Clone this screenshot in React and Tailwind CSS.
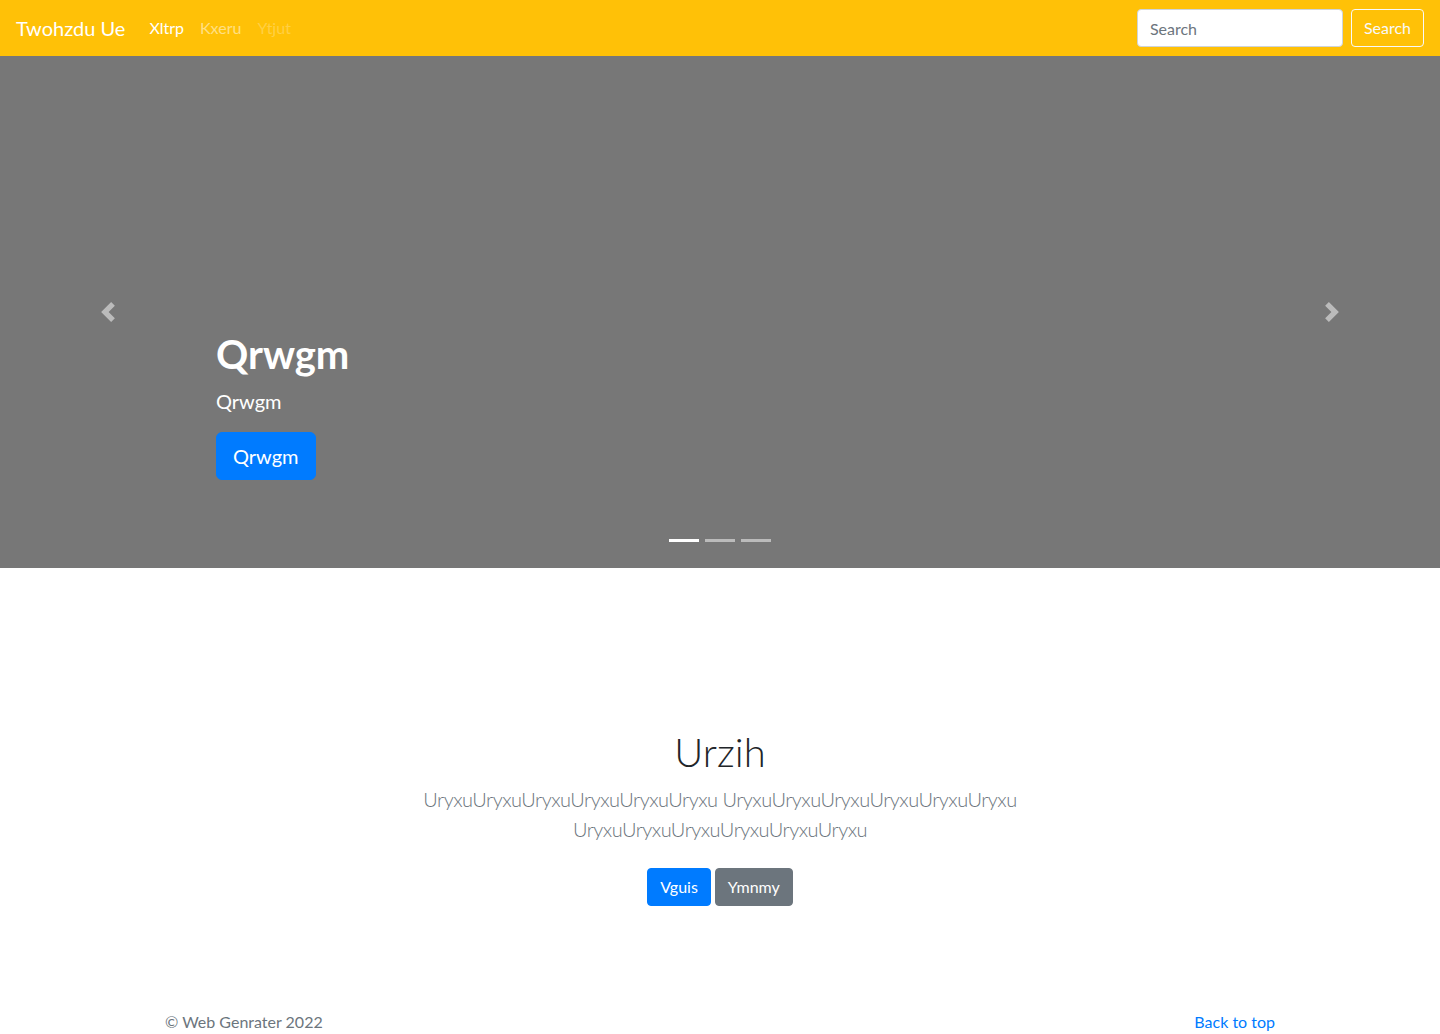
import React, { useState } from "react";

const slides = [{ title: "Qrwgm", text: "Qrwgm", button: "Qrwgm" }, {}, {}];

const navLinks = [
  { label: "Xltrp", cls: "text-white" },
  { label: "Kxeru", cls: "text-white/50" },
  { label: "Ytjut", cls: "text-white/25" },
];

const Chevron = ({ dir }) => (
  <svg width="20" height="20" viewBox="0 0 8 8" className="opacity-50">
    {dir === "prev" ? (
      <path fill="#fff" d="M5.25 0l-4 4 4 4 1.5-1.5-2.5-2.5 2.5-2.5-1.5-1.5z" />
    ) : (
      <path fill="#fff" d="M2.75 0l-1.5 1.5 2.5 2.5-2.5 2.5 1.5 1.5 4-4-4-4z" />
    )}
  </svg>
);

function Navbar() {
  return (
    <nav className="h-14 bg-[#ffc107] flex items-center px-4">
      <a href="#" className="text-xl text-white mr-4 leading-[30px]">
        Twohzdu Ue
      </a>
      <ul className="flex">
        {navLinks.map((l) => (
          <li key={l.label}>
            <a href="#" className={"block px-2 py-2 " + l.cls}>
              {l.label}
            </a>
          </li>
        ))}
      </ul>
      <form className="ml-auto flex items-center" onSubmit={(e) => e.preventDefault()}>
        <input
          type="text"
          placeholder="Search"
          className="w-[206px] h-[38px] px-3 rounded border border-[#ced4da] bg-white text-[#495057] placeholder:text-[#6c757d] mr-2 outline-none"
        />
        <button className="h-[38px] px-3 rounded border border-[#f8f9fa] text-[#f8f9fa]">
          Search
        </button>
      </form>
    </nav>
  );
}

function Carousel() {
  const [active, setActive] = useState(0);
  const slide = slides[0];
  return (
    <div className="relative h-[512px] bg-[#777] flex">
      <button className="w-[15%] flex items-center justify-center">
        <Chevron dir="prev" />
      </button>
      <div className="flex-1 flex flex-col justify-end pb-[88px] text-white">
        <h1 className="text-[40px] font-bold leading-[48px] mb-2">{slide.title}</h1>
        <p className="text-xl leading-[30px] mb-4">{slide.text}</p>
        <div>
          <a
            href="#"
            className="inline-block bg-[#007bff] border border-[#007bff] text-white text-xl px-4 py-2 leading-[30px] rounded-md"
          >
            {slide.button}
          </a>
        </div>
      </div>
      <button className="w-[15%] flex items-center justify-center">
        <Chevron dir="next" />
      </button>
      <ol className="absolute bottom-[26px] left-0 right-0 flex justify-center">
        {slides.map((s, i) => (
          <li
            key={i}
            onClick={() => setActive(i)}
            className={
              "w-[30px] h-[3px] mx-[3px] bg-white " +
              (i === active ? "opacity-100" : "opacity-50")
            }
          />
        ))}
      </ol>
    </div>
  );
}

function App() {
  return (
    <div className="min-h-screen bg-white font-['Lato',sans-serif] text-base leading-6 text-[#212529]">
      <Navbar />
      <Carousel />
      <section className="text-center pt-[160px] pb-12">
        <div className="max-w-[640px] mx-auto px-[15px]">
          <h1 className="text-[40px] font-light leading-[48px] mb-2">Urzih</h1>
          <p className="text-xl font-light leading-[30px] tracking-[-0.5px] text-[#6c757d] mb-4">
            UryxuUryxuUryxuUryxuUryxuUryxu UryxuUryxuUryxuUryxuUryxuUryxu
            UryxuUryxuUryxuUryxuUryxuUryxu
          </p>
          <p className="flex justify-center gap-1">
            <a href="#" className="inline-block my-2 bg-[#007bff] border border-[#007bff] text-white px-3 py-1.5 leading-6 rounded">
              Vguis
            </a>
            <a href="#" className="inline-block my-2 bg-[#6c757d] border border-[#6c757d] text-white px-3 py-1.5 leading-6 rounded">
              Ymnmy
            </a>
          </p>
        </div>
      </section>
      <footer className="text-[#6c757d] pt-12 pb-12">
        <div className="max-w-[1140px] mx-auto px-[15px] flex justify-between">
          <p>© Web Genrater 2022</p>
          <a href="#" className="text-[#007bff]">
            Back to top
          </a>
        </div>
      </footer>
    </div>
  );
}

export default App;
